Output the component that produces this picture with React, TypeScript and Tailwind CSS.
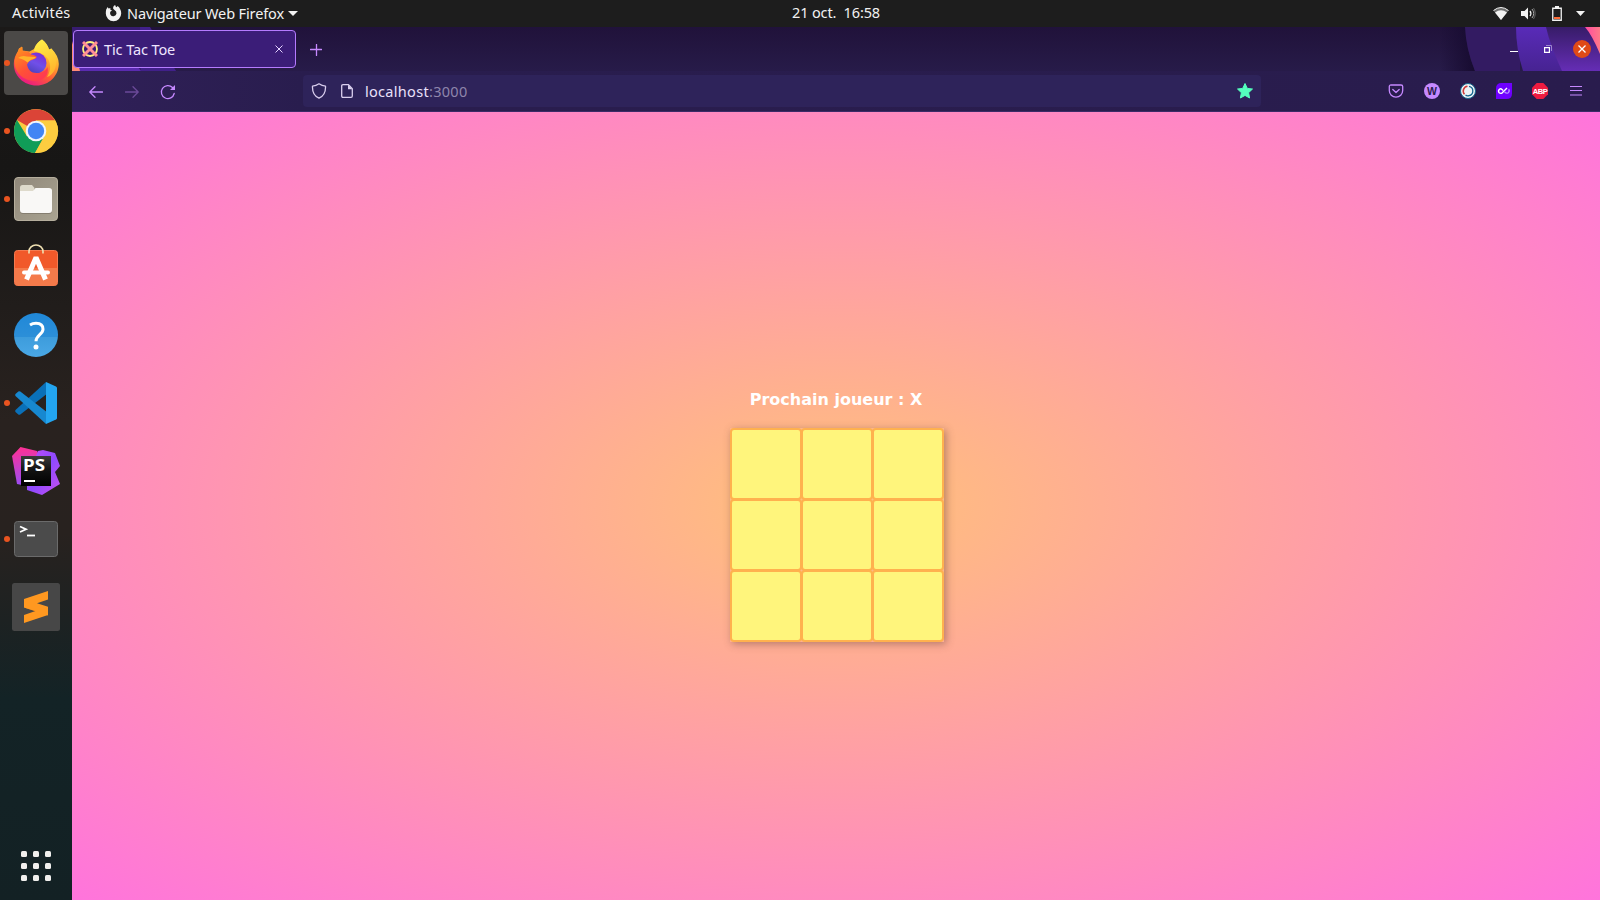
import type { ReactNode } from "react";

function Dock({ children, running, active }: { children: ReactNode; running?: boolean; active?: boolean }) {
  return (
    <div className={`relative flex h-16 w-16 shrink-0 items-center justify-center rounded ${active ? "bg-[#4b4947]" : ""}`}>
      {running && <span className="absolute top-[29px] left-0 h-1.5 w-1.5 rounded-full bg-[#e95420]" />}
      {children}
    </div>
  );
}

function Firefox() {
  return (
    <svg width="48" height="48" viewBox="0 0 48 48">
      <defs>
        <linearGradient id="fx" x1=".85" y1="0" x2=".25" y2="1">
          <stop offset="0" stopColor="#fff44f" />
          <stop offset=".35" stopColor="#ffb02e" />
          <stop offset=".65" stopColor="#ff5a36" />
          <stop offset="1" stopColor="#e8128c" />
        </linearGradient>
        <linearGradient id="fg" x1=".7" y1="0" x2=".2" y2="1">
          <stop offset="0" stopColor="#7a2bd8" />
          <stop offset=".5" stopColor="#7050e8" />
          <stop offset="1" stopColor="#4a3fb8" />
        </linearGradient>
        <linearGradient id="fh" x1="0" y1="0" x2=".7" y2="1">
          <stop offset="0" stopColor="#ff9a1a" />
          <stop offset=".6" stopColor="#ff5038" />
          <stop offset="1" stopColor="#ff3a50" />
        </linearGradient>
        <linearGradient id="fy" x1="0" y1="0" x2=".3" y2="1">
          <stop offset="0" stopColor="#fff34a" />
          <stop offset="1" stopColor="#ffb62c" />
        </linearGradient>
      </defs>
      <path d="M30 .5c4 3 6 6 7 10 1 0 2-.5 2.300-1 5 5 7.500 10 7.500 15.500C46.500 37 37 46.500 24.500 46.500S1.800 37 1.800 25c0-5 1.500-9 4-12.500L7 9.500l3-2 .5 4 7 1L22 10C24 5 27 2 30 .5z" fill="url(#fx)" />
      <path d="M22 12C23 6 26 3 30 .5c3.500 3 6 6 7 10l2.300-1C44 15 45 20 44 26c-1 6-4 10-9 12 4-6 4-13 1-18-3-4-8-7-14-8z" fill="url(#fy)" />
      <circle cx="24" cy="24" r="10.500" fill="url(#fg)" />
      <path d="M2.500 23c.5-6 3-8 4.500-13.500L10.500 8v4.500c4-1 7 0 8.500 3 3 1 6 1 5.500 3-1 2-5 2-7.500 4-1 1-1 2-2 3 1 5 4 8.500 9.500 8.500 5 0 9-2 11-6 2 8-4 14-12 14C11 42 2.500 33 2.500 23z" fill="url(#fh)" />
      <path d="M6 19q4-3 9-1.500l9 .5q-1 2-5 2.800l-3.500 2.700Q12 20 6 19z" fill="#ffb42a" />
    </svg>
  );
}

function Chrome() {
  return (
    <svg width="46" height="46" viewBox="0 0 46 46">
      <circle cx="23" cy="23" r="22" fill="#fbcb40" />
      <path d="M23 23L3.950 12A22 22 0 0 1 42 12.500H23z" fill="#db4437" />
      <path d="M23 23L13.900 28.250 3.950 12A22 22 0 0 0 22 45l9-16.500z" fill="#109d58" />
      <path d="M23 12.500h19.300A22 22 0 0 1 22 45l10-17z" fill="#fdcd40" />
      <circle cx="23" cy="23" r="10.300" fill="#f1f5fb" />
      <circle cx="23" cy="23" r="8.200" fill="#4285f4" />
    </svg>
  );
}

function Files() {
  return (
    <svg width="44" height="44" viewBox="0 0 44 44">
      <defs>
        <linearGradient id="fl" x1="0" y1="0" x2="1" y2="1">
          <stop offset="0" stopColor="#90887a" />
          <stop offset="1" stopColor="#a9a391" />
        </linearGradient>
      </defs>
      <rect x=".5" y=".5" width="43" height="43" rx="3.500" fill="url(#fl)" stroke="#b5ae9d" />
      <rect x="6" y="12" width="32" height="25" rx="3" fill="#857e70" />
      <path d="M6 10.500Q6 8 8.500 8H18l2.500 3v4H6z" fill="#dedacb" />
      <path d="M6 14h13l2.500-3H35Q38 11 38 13.500V33q0 3-3 3H9q-3 0-3-3z" fill="#f9f8f6" />
    </svg>
  );
}

function Software() {
  return (
    <svg width="44" height="44" viewBox="0 0 44 44" className="-mt-1">
      <rect x=".5" y="7.500" width="43" height="35" rx="3" fill="#f1592a" stroke="#f47a50" />
      <path d="M1 25h42v14.500q0 3-3 3H4q-3 0-3-3z" fill="#f47a4a" />
      <path d="M15 10.500V8.500a7 6.500 0 0 1 14 0V10.500" fill="none" stroke="#efe0b2" strokeWidth="1.600" />
      <path d="M12.500 36.500L22 14.500 31.500 36.500" fill="none" stroke="#fff" strokeWidth="5" strokeLinejoin="bevel" />
      <rect x="8" y="27.500" width="28" height="4" rx="2" fill="#fff" />
    </svg>
  );
}

function Help() {
  return (
    <svg width="44" height="44" viewBox="0 0 44 44">
      <defs>
        <linearGradient id="hq" x1="0" y1="0" x2="0" y2="1">
          <stop offset="0" stopColor="#2088d8" />
          <stop offset=".54" stopColor="#2c8fd8" />
          <stop offset=".55" stopColor="#3d9cdc" />
          <stop offset="1" stopColor="#4aa8e6" />
        </linearGradient>
      </defs>
      <circle cx="22" cy="22" r="22" fill="url(#hq)" />
      <path d="M16 12c2-1.300 4-1.700 6-1.700 4.500 0 7 2.200 7 6 0 5-7 6-7 12" fill="none" stroke="#fff" strokeWidth="3" />
      <circle cx="22" cy="34" r="2.500" fill="#fff" />
    </svg>
  );
}

function Code() {
  return (
    <svg width="44" height="44" viewBox="0 0 44 44">
      <path d="M32 1L1.500 29q-.8 1 0 2l2.800 2.500q1 .7 2 0L34 12z" fill="#0a70b8" />
      <path d="M32 43L1.500 15q-.8-1 0-2l2.800-2.500q1-.7 2 0L34 32z" fill="#1788d0" />
      <path d="M32 1l10 4.500Q43 6 43 7v30q0 1-1 1.500L32 43z" fill="#23a5f0" />
    </svg>
  );
}

function PhpStorm() {
  return (
    <svg width="48" height="48" viewBox="0 0 48 48">
      <defs>
        <linearGradient id="pk" x1=".3" y1="0" x2=".4" y2="1">
          <stop offset="0" stopColor="#ff3093" />
          <stop offset="1" stopColor="#9b4df5" />
        </linearGradient>
        <linearGradient id="pv" x1="0" y1="0" x2="1" y2="1">
          <stop offset="0" stopColor="#c44cf5" />
          <stop offset=".5" stopColor="#8e4aff" />
          <stop offset="1" stopColor="#c84ff0" />
        </linearGradient>
        <linearGradient id="pb" x1="0" y1="0" x2="0" y2="1">
          <stop offset="0" stopColor="#3a3a3a" />
          <stop offset=".5" stopColor="#111" />
          <stop offset="1" stopColor="#000" />
        </linearGradient>
      </defs>
      <path d="M8.500 0L25 4 28 10 10 38 5 37 0 9z" fill="url(#pk)" />
      <path d="M26 4l5-1 12 3 5 13-5 6 5 12-18 11-15-5V38L24 9z" fill="url(#pv)" />
      <rect x="9" y="9" width="30" height="30" fill="url(#pb)" />
      <text x="11" y="24.400" fill="#fff" fontFamily="Noto Sans, sans-serif" fontWeight="700" fontSize="16.500" textLength="22" lengthAdjust="spacingAndGlyphs">PS</text>
      <rect x="12" y="33" width="11" height="2" fill="#fff" />
    </svg>
  );
}

function Terminal() {
  return (
    <svg width="44" height="36" viewBox="0 0 44 36">
      <rect x=".5" y=".5" width="43" height="35" rx="3" fill="#4b4b4b" stroke="#6b6b6b" />
      <path d="M6 5.500l6 2.700L6 11" fill="none" stroke="#fff" strokeWidth="1.800" />
      <path d="M13 14.500h8" stroke="#fff" strokeWidth="1.800" />
    </svg>
  );
}

function Sublime() {
  return (
    <svg width="48" height="48" viewBox="0 0 48 48">
      <rect width="48" height="48" rx="2.500" fill="#474747" />
      <path d="M12 24.500L36 32.500 36 25 20 20z" fill="#e8850f" />
      <path d="M12 16L36 8v8.500L25 20.200l11 3.600V32L12 40v-8l11.500-4L12 24.500z" fill="#ff9820" />
    </svg>
  );
}

const line = { fill: "none", stroke: "#c689ff", strokeWidth: 1.3, strokeLinecap: "round", strokeLinejoin: "round" } as const;

function TopBar() {
  return (
    <header className="grid h-[27px] grid-cols-[808px_92px_1fr] bg-[#1d1d1d] text-[14.500px] leading-[25px] text-[#f2f2f2]">
      <div className="flex items-center">
        <span className="mt-[-2px] ml-3 w-[93px] tracking-[0.2px]">Activités</span>
        <svg width="17" height="17" viewBox="0 0 17 17" className="mr-[5px] shrink-0">
          <path d="M1.200 4.500L2.700 2l.8 1.500L5.500 3 5.200 4.500 7 5.500 5.500 6.500q-1 1.500 0 3.200 1.200 1.800 3.200 1.500 2.500-.4 2.800-2.700.2-2.500-2-3.500Q7.500 4 8.200 2 8.800.6 10.200 0q0 1.500 1.300 2.200L12.700 1q3.500 3 3.500 7.500a7.700 7.700 0 0 1-15.400 0q0-2.300.4-4z" fill="#f2f2f2" />
        </svg>
        <span className="mt-[-1px] w-[157px] whitespace-nowrap tracking-[-0.130px]">Navigateur Web Firefox</span>
        <svg width="10" height="5" viewBox="0 0 10 5" className="ml-1"><path d="M0 0h10L5 5z" fill="#f2f2f2" /></svg>
      </div>
      <div className="-ml-4 whitespace-pre tracking-[-0.130px]">21 oct.  16:58</div>
      <div className="flex items-center justify-end pr-[15px]">
        <svg width="16" height="14" viewBox="0 0 16 14" className="mr-3">
          <path d="M.5 3.500Q8-2.500 15.500 3.500L8 13z" fill="#707070" />
          <path d="M.5 3.500Q8-2.500 15.500 3.500" fill="none" stroke="#f2f2f2" strokeWidth="1" />
          <path d="M2 5.500Q8 1 14 5.500L8 13z" fill="#f2f2f2" />
        </svg>
        <svg width="15" height="13" viewBox="0 0 15 13" className="mr-4">
          <path d="M0 4h3.500L7 .5v12L3.500 9H0z" fill="#f2f2f2" />
          <path d="M9 4q1.800 2.500 0 5" stroke="#f2f2f2" fill="none" strokeWidth="1.300" />
          <path d="M11 2q3.500 4.500 0 9" stroke="#aaa" fill="none" />
          <path d="M12.500 1q3.500 5.500 0 11" stroke="#666" fill="none" />
        </svg>
        <svg width="10" height="15" viewBox="0 0 10 15" className="mr-[14px]">
          <path d="M.75 2.250h8.500v12H.75z" fill="none" stroke="#f2f2f2" strokeWidth="1.300" />
          <path d="M3 0h4v2H3z" fill="#f2f2f2" />
          <path d="M2 11h6v2H2z" fill="#ff6a35" />
        </svg>
        <svg width="9" height="5" viewBox="0 0 9 5"><path d="M0 0h9L4.500 5z" fill="#f2f2f2" /></svg>
      </div>
    </header>
  );
}

function Favicon() {
  return (
    <svg width="16" height="16" viewBox="0 0 16 16">
      <circle cx="8" cy="8" r="7" fill="none" stroke="#fff27a" strokeWidth="1.800" />
      <path d="M1 1l14 14m0-14L1 15" stroke="#ff8d96" strokeWidth="3" />
    </svg>
  );
}

function TabStrip() {
  return (
    <div className="relative flex h-11 bg-linear-to-b from-[#20123a] to-[#271b49]">
      <svg width="180" height="44" viewBox="0 0 180 44" className="absolute top-0 left-0">
        <path d="M0 0h68l36 44H0z" fill="#371c70" />
        <path d="M0 30h58l11 14H0z" fill="#5a2bb0" />
        <path d="M68 0h10l26 44H69z" fill="#41208a" />
        <path d="M0 14l8 30H0z" fill="#ff8a78" />
      </svg>
      <svg width="160" height="44" viewBox="0 0 160 44" className="absolute top-0 right-0">
        <defs>
          <linearGradient id="r0"><stop offset="0" stopColor="#170b30" stopOpacity="0" /><stop offset="1" stopColor="#170b30" /></linearGradient>
          <linearGradient id="r1" x1="0" y1="0" x2="0" y2="1"><stop offset="0" stopColor="#592bb8" /><stop offset="1" stopColor="#472392" /></linearGradient>
          <linearGradient id="r2" x1="0" y1="0" x2="0" y2="1"><stop offset="0" stopColor="#371c68" /><stop offset="1" stopColor="#652db5" /></linearGradient>
          <linearGradient id="r3"><stop offset="0" stopColor="#ff4aa0" /><stop offset="1" stopColor="#ff7a88" /></linearGradient>
        </defs>
        <path d="M0 0h25q1 22 10 44H0z" fill="url(#r0)" />
        <path d="M25 0h55v44H35Q26 22 25 0z" fill="#331b62" />
        <path d="M76 0h35l13 44H83Q76 22 76 0z" fill="url(#r1)" />
        <path d="M106 0h54v44h-38Q110 18 106 0z" fill="url(#r2)" />
        <path d="M145 0h15v27Q152 8 145 0z" fill="url(#r3)" />
      </svg>
      <div className="relative mt-[3px] ml-px flex h-[38px] w-[223px] items-center rounded-[4px] border border-[#b57bff] bg-[#3b1d78] pl-2">
        <Favicon />
        <span className="mt-px ml-[6px] grow text-[14.500px] tracking-[-0.100px] text-[#eee5ff]">Tic Tac Toe</span>
        <svg width="8" height="8" viewBox="0 0 8 8" className="mr-3"><path d="M.5.5l7 7m0-7l-7 7" stroke="#e3d3ff" strokeWidth="1" /></svg>
      </div>
      <svg width="12" height="12" viewBox="0 0 12 12" className="relative mt-[17px] ml-[14px]"><path d="M6.500 .5v11M.5 5.500h11" {...line} /></svg>
      <div className="relative ml-auto flex items-center pr-[9px]">
        <svg width="8" height="16" viewBox="0 0 8 16" className="mr-[26px]"><path d="M0 10.500h8" stroke="#fff" /></svg>
        <svg width="8" height="8" viewBox="0 0 8 8" className="mr-[21px]">
          <path d="M2 .5h5.500V6" fill="none" stroke="#9c86cc" />
          <path d="M.6 2.600h4.800v4.800H.6z" fill="none" stroke="#fff" strokeWidth="1.200" />
        </svg>
        <span className="flex h-[18px] w-[18px] items-center justify-center rounded-full bg-[#df4a16]">
          <svg width="8" height="8" viewBox="0 0 8 8"><path d="M.5.5l7 7m0-7l-7 7" stroke="#fff" strokeWidth="1.300" /></svg>
        </span>
      </div>
    </div>
  );
}

function Toolbar() {
  return (
    <div className="flex h-[41px] items-center border-b border-[#3b2b68] bg-linear-to-r from-[#302058] via-[#291d4e] via-15% to-[#291c4d]">
      <svg width="14" height="12" viewBox="0 0 14 12" className="mt-px ml-[17px]"><path d="M6 .8L.8 6 6 11.200M1 6h12.500" {...line} /></svg>
      <svg width="14" height="12" viewBox="0 0 14 12" className="mt-px ml-[22px] opacity-40"><path d="M8 .8L13.200 6 8 11.200M13 6H.5" {...line} /></svg>
      <svg width="16" height="16" viewBox="0 0 16 16" className="mt-px ml-[21px]">
        <path d="M14.200 9.500A6.500 6.500 0 1 1 12.500 3.500L14 5" {...line} />
        <path d="M15 1v5h-5z" fill="#c689ff" />
      </svg>
      <div className="ml-[127px] flex h-8 w-[958px] items-center rounded-[4px] bg-[#2e235a] pr-2 pl-2">
        <svg width="16" height="16" viewBox="0 0 16 16"><path d="M8 .8q3 2.200 6.500 2.300.5 9-6.500 12.100Q1 12.100 1.500 3.100 5 3 8 .8z" fill="none" stroke="#d9ceee" strokeWidth="1.300" strokeLinejoin="round" /></svg>
        <svg width="12" height="14" viewBox="0 0 12 14" className="ml-[14px]">
          <path d="M.7 2Q.7.7 2 .7h5.500l3.800 4V12q0 1.300-1.300 1.300H2Q.7 13.300.7 12z" fill="none" stroke="#d9ceee" strokeWidth="1.300" strokeLinejoin="round" />
          <path d="M7 .7v4.500h4.500z" fill="#d9ceee" />
        </svg>
        <span className="mt-px ml-3 grow text-[14.500px] tracking-[0.300px] text-[#e9e0fb]">localhost<span className="text-[#8f86ac]">:3000</span></span>
        <svg width="16" height="16" viewBox="0 0 16 16"><path d="M8 .5l2.300 4.900 5.200.6-3.900 3.700 1 5.300L8 12.400 3.400 15l1-5.300L.5 6l5.200-.6z" fill="#54ffbd" stroke="#54ffbd" strokeLinejoin="round" /></svg>
      </div>
      <div className="ml-auto flex items-center gap-5 pr-4">
        <svg width="16" height="16" viewBox="0 0 16 16"><path d="M3 2h10q1.700 0 1.700 1.500V7.500a6.700 6.700 0 0 1-13.400 0V3.500Q1.300 2 3 2zM4.800 6.500L8 9.500l3.200-3" {...line} /></svg>
        <svg width="16" height="16" viewBox="0 0 16 16">
          <circle cx="8" cy="8" r="8" fill="#c689ff" />
          <text x="8" y="11.800" textAnchor="middle" fontFamily="Liberation Sans, sans-serif" fontSize="10.500" fontWeight="700" fill="#291d4e">W</text>
        </svg>
        <svg width="16" height="16" viewBox="0 0 16 16">
          <circle cx="8" cy="8" r="7.500" fill="#eef3f5" stroke="#16678c" strokeWidth="1" />
          <path d="M7.500 3.300a4.800 4.800 0 0 0-3 8" fill="none" stroke="#cf3b38" strokeWidth="1.500" />
          <path d="M9 3.300a4.800 4.800 0 0 1 0 9.400q-2 .5-3.500-.7" fill="none" stroke="#11648d" strokeWidth="1.300" />
        </svg>
        <svg width="16" height="16" viewBox="0 0 16 16">
          <path d="M5.500 0H16v10.500Q16 16 10.500 16H0V5.500Q0 0 5.500 0z" fill="#6f00ff" />
          <path d="M11 5L6.300 9.800Q4.500 11 3.200 9.800 1.800 8 3.200 6.500 4.700 5.200 6 6.500L7 7.500" fill="none" stroke="#fff" strokeWidth="1.400" />
          <path d="M8.500 8.700q2 2.200 3.700 1 1.800-1.700.4-3.400" fill="none" stroke="#b78aff" strokeWidth="1.400" />
        </svg>
        <svg width="16" height="16" viewBox="0 0 16 16" className="overflow-visible">
          <path d="M4.700 0h6.600L16 4.700v6.600L11.300 16H4.700L0 11.300V4.700z" fill="#ee1b40" />
          <text x="8" y="10.800" textAnchor="middle" fontFamily="Liberation Sans Narrow, Liberation Sans, sans-serif" fontSize="7.600" letterSpacing="-0.450" fontWeight="700" fill="#fff">ABP</text>
        </svg>
        <svg width="16" height="16" viewBox="0 0 16 16"><path d="M2 3.500h12M2 7.500h12M2 12h12" stroke="#c689ff" strokeWidth="1.200" /></svg>
      </div>
    </div>
  );
}

function Game() {
  return (
    <main className="flex grow flex-col items-center bg-[radial-gradient(#ffc17a,#ff74dc)] pt-[278px]">
      <h1 className="mb-[19px] font-['DejaVu_Sans'] text-[16px] leading-[19px] font-bold text-white">Prochain joueur : X</h1>
      <div className="ml-[2px] grid grid-cols-[71px_71px_72px] grid-rows-[71px_71px_72px] shadow-[2px_2px_8px_rgba(90,60,60,0.45)]">
        {Array.from({ length: 9 }, (_, i) => (
          <button key={i} className="h-[72px] w-[72px] rounded-[4px] border-2 border-[#ffb14e] bg-[#fff57c]" aria-label={`Case ${i + 1}`} />
        ))}
      </div>
    </main>
  );
}

export default function App() {
  return (
    <div className="flex h-[900px] w-[1600px] flex-col overflow-hidden font-['Noto_Sans',sans-serif]">
      <TopBar />
      <div className="flex min-h-0 grow">
        <aside className="flex w-[72px] flex-col items-center gap-1 bg-[linear-gradient(#1b1918_0%,#171615_16%,#211d1b_32%,#29221f_45%,#28221f_58%,#1d2222_68%,#132326_77%,#132124_100%)] pt-1">
          <Dock running active><Firefox /></Dock>
          <Dock running><Chrome /></Dock>
          <Dock running><Files /></Dock>
          <Dock><Software /></Dock>
          <Dock><Help /></Dock>
          <Dock running><Code /></Dock>
          <Dock><PhpStorm /></Dock>
          <Dock running><Terminal /></Dock>
          <Dock><Sublime /></Dock>
          <div className="mt-auto mb-[19px] grid grid-cols-3 gap-1.5">
            {Array.from({ length: 9 }, (_, i) => (
              <span key={i} className="h-1.5 w-1.5 rounded-[1.500px] bg-[#f0efed]" />
            ))}
          </div>
        </aside>
        <div className="flex min-w-0 grow flex-col">
          <TabStrip />
          <Toolbar />
          <Game />
        </div>
      </div>
    </div>
  );
}
